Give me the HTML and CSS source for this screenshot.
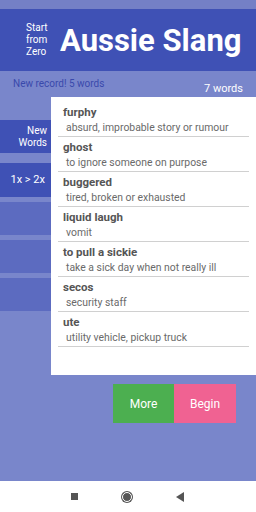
FILE: index.html
```html
<!DOCTYPE html>
<html lang="en">
<head>
    <meta charset="UTF-8">
    <meta name="viewport" content="width=device-width, initial-scale=1.0">
    <title>Aussie Slang</title>
    <link rel="stylesheet" href="styles.css">
</head>
<body>
    <div class="status-bar"></div>

    <!-- Title bar -->
    <header class="top">
        <div class="start">Start<br>from<br>Zero</div>
        <h1 class="title">Aussie Slang</h1>
    </header>

    <div class="info">
        <span class="record">New record! 5 words</span>
        <span class="count">7 words</span>
    </div>

    <div class="main">
        <div class="side">
            <button class="side-btn dark">New<br>Words</button>
            <button class="side-btn dark first-gap">1x &gt; 2x</button>
            <button class="side-btn"></button>
            <button class="side-btn"></button>
            <button class="side-btn"></button>
        </div>

        <ul class="word-list">
            <li class="word"><div class="term">furphy</div><div class="def">absurd, improbable story or rumour</div></li>
            <li class="word"><div class="term">ghost</div><div class="def">to ignore someone on purpose</div></li>
            <li class="word"><div class="term">buggered</div><div class="def">tired, broken or exhausted</div></li>
            <li class="word"><div class="term">liquid laugh</div><div class="def">vomit</div></li>
            <li class="word"><div class="term">to pull a sickie</div><div class="def">take a sick day when not really ill</div></li>
            <li class="word"><div class="term">secos</div><div class="def">security staff</div></li>
            <li class="word"><div class="term">ute</div><div class="def">utility vehicle, pickup truck</div></li>
        </ul>
    </div>

    <div class="actions">
        <button class="more-btn">More</button>
        <button class="begin-btn">Begin</button>
    </div>

    <!-- Android nav bar -->
    <nav class="nav-bar">
        <span class="nav-square"></span>
        <span class="nav-home"></span>
        <svg class="nav-back" width="9" height="10" viewBox="0 0 9 10"><polygon points="8,0 8,10 0,5" fill="#555"/></svg>
    </nav>
</body>
</html>
```

FILE: styles.css
```css
body {
    margin: 0;
    width: 256px;
    height: 512px;
    display: flex;
    flex-direction: column;
    background-color: #7986CB;
    font-family: Roboto, "Liberation Sans", sans-serif;
    overflow: hidden;
}

.status-bar {
    height: 9px;
    background-color: #7480c6;
}

/* Header */
.top {
    height: 62px;
    display: flex;
    align-items: center;
    background-color: #3F51B5;
}

.start {
    width: 34px;
    padding-left: 26px;
    color: #fff;
    font-size: 10px;
    line-height: 12px;
}

.title {
    margin: 0;
    color: #fff;
    font-size: 31px;
    font-weight: bold;
}

.info {
    height: 26px;
    display: flex;
    justify-content: space-between;
    padding: 0 13px;
}

.record {
    margin-top: 7px;
    font-size: 10px;
    color: #3949AB;
}

.count {
    margin-top: 11px;
    font-size: 11px;
    color: #fff;
}

/* Main area */
.main {
    display: flex;
    height: 278px;
}

.side {
    width: 51px;
    padding-top: 23px;
    display: flex;
    flex-direction: column;
    gap: 5px;
}

.side-btn {
    height: 33px;
    border: none;
    padding: 0 4px 0 0;
    text-align: right;
    background-color: #5C6BC0;
    color: #fff;
    font-family: inherit;
    font-size: 10px;
    line-height: 12px;
}

.side-btn.dark {
    background-color: #3F51B5;
}

.side-btn.first-gap {
    margin-top: 5px;
    height: 34px;
    padding-right: 6px;
    font-size: 11px;
}

/* Word list card */
.word-list {
    flex: 1;
    margin: 0;
    list-style: none;
    padding: 8px 7px 0;
    background-color: #fff;
}

.word {
    padding-bottom: 1px;
    margin-bottom: 3px;
    border-bottom: 1px solid #d0d0d0;
}

.term {
    padding-left: 5px;
    font-size: 11.5px;
    line-height: 15px;
    font-weight: bold;
    color: #555;
}

.def {
    margin-top: 1px;
    padding-left: 8px;
    font-size: 10.4px;
    line-height: 14px;
    color: #6a6a6a;
}

/* Bottom buttons */
.actions {
    display: flex;
    justify-content: flex-end;
    padding-right: 20px;
    margin-top: 9px;
}

.more-btn, .begin-btn {
    width: 62px;
    height: 39px;
    border: none;
    color: #fff;
    font-family: inherit;
    font-size: 12px;
}

.more-btn {
    width: 61px;
    background-color: #4CAF50;
}

.begin-btn {
    background-color: #F06292;
}

.nav-bar {
    margin-top: auto;
    height: 31px;
    background-color: #fff;
    display: flex;
    align-items: center;
    justify-content: center;
    gap: 44px;
}

.nav-square {
    width: 7px;
    height: 7px;
    background-color: #555;
}

.nav-home {
    width: 8px;
    height: 8px;
    border-radius: 50%;
    background-color: #555;
    border: 1px solid #fff;
    box-shadow: 0 0 0 1px #555;
}
```
